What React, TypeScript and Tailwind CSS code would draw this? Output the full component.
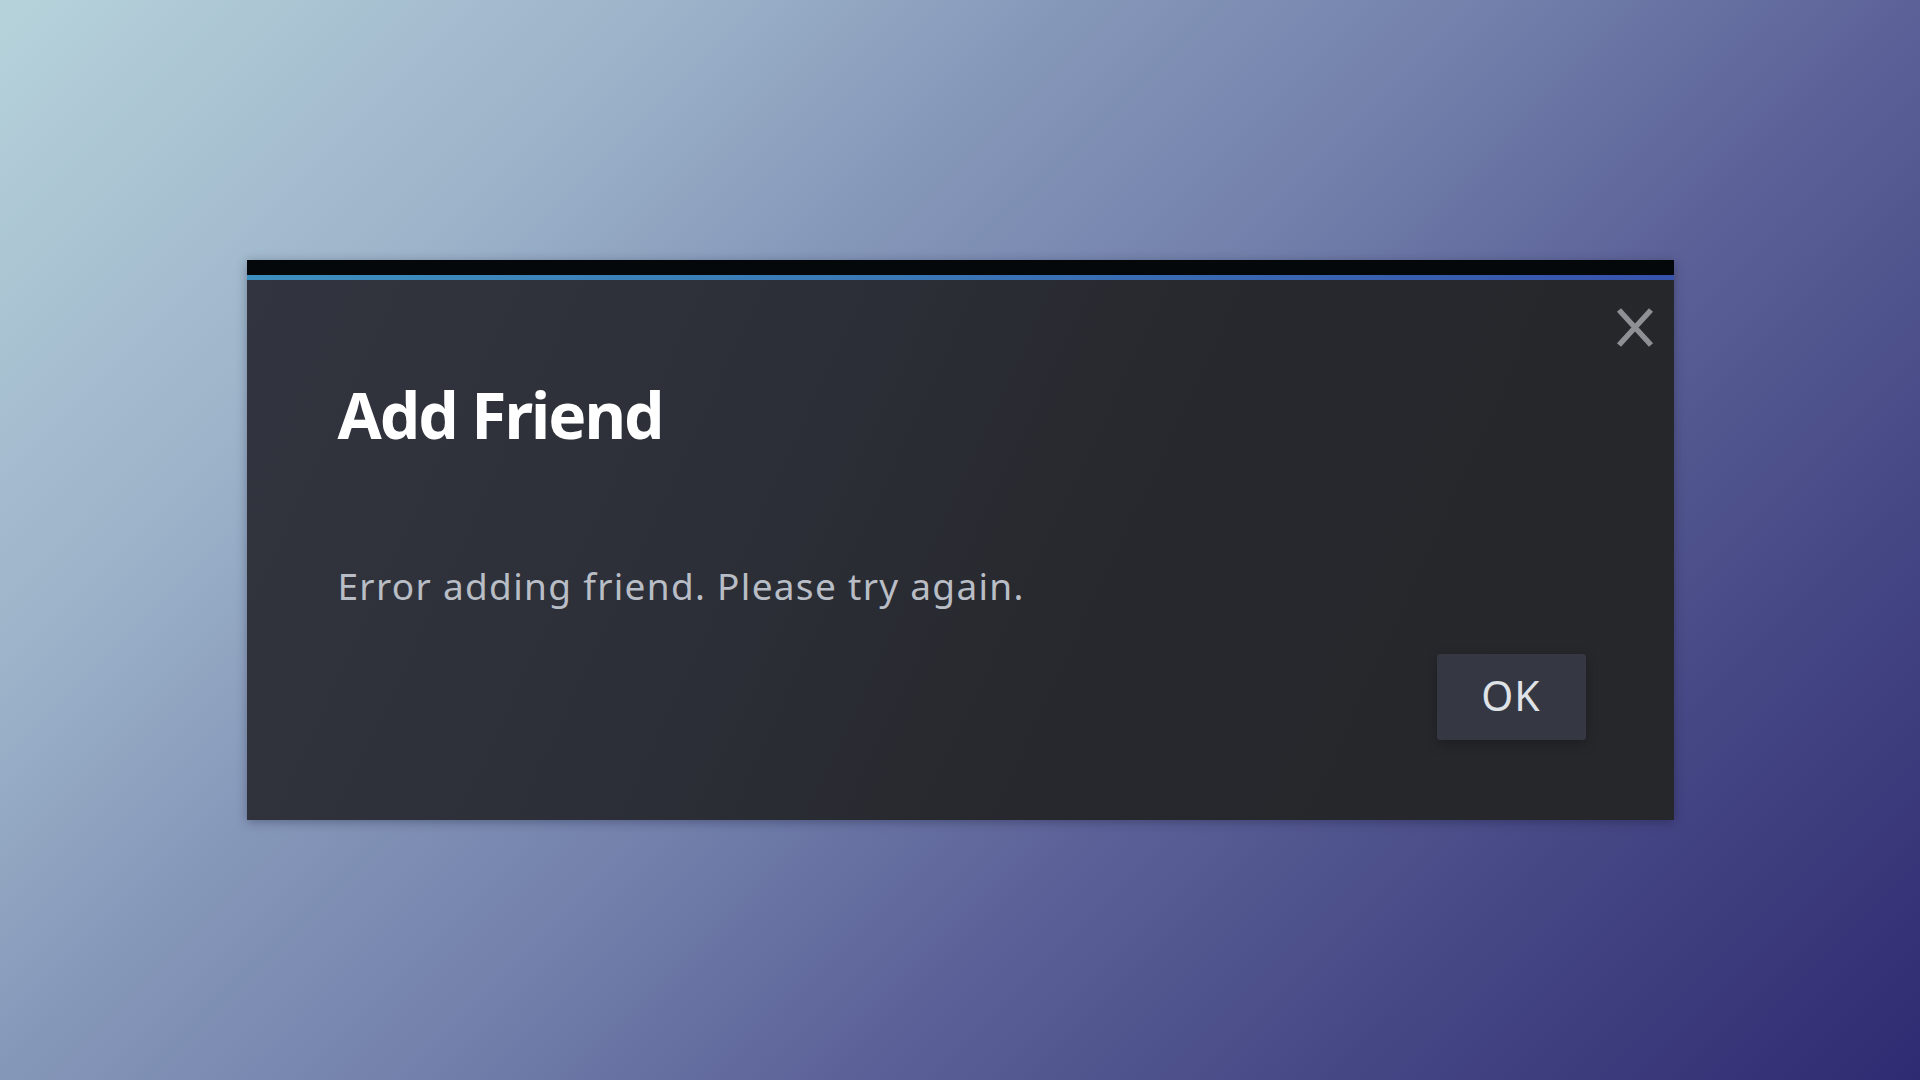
export default function App() {
  return (
    <div className="flex h-screen w-full items-center justify-center bg-[linear-gradient(135deg,#b6d3db_0%,#9cb2c9_23%,#8597b9_36%,#7280ab_50%,#5c6298_64%,#464885_80%,#2f2b72_100%)] font-['Noto_Sans','Open_Sans',sans-serif]">
      <div className="relative flex w-[1427px] flex-col shadow-[0_2px_10px_rgba(20,20,50,0.35)]">
        <div className="h-[15px] bg-[#05080a]" />
        <div className="h-[5px] bg-[linear-gradient(to_right,#3d8fbd_0%,#3a78b6_45%,#3752ab_100%)]" />

        <div className="flex flex-col bg-[linear-gradient(115deg,#32353f_0%,#2c2f37_35%,#26282d_60%,#25272b_100%)] pb-[80px] pl-[91px] pr-[88px] pt-[103px]">
          <h1 className="text-[64px] font-bold leading-none tracking-[-2px] text-white">
            Add Friend
          </h1>
          <p className="mt-[120px] text-[37px] leading-none tracking-[1.3px] text-[#b9bdc5]">
            Error adding friend. Please try again.
          </p>
          <div className="mt-[50px] flex justify-end">
            <button className="flex h-[86px] w-[149px] items-center justify-center rounded-[3px] bg-[#353843] pb-1 text-[41px] leading-none tracking-[1px] text-[#dfe2e6] shadow-[0_4px_12px_rgba(0,0,0,0.25)]">
              OK
            </button>
          </div>
        </div>

        <button className="absolute right-[20px] top-[47px] text-[#8d9095]" aria-label="Close">
          <svg width="38" height="41" viewBox="0 0 38 41" fill="none">
            <path d="M3 3 L35 38 M35 3 L3 38" stroke="currentColor" strokeWidth="5.5" />
          </svg>
        </button>
      </div>
    </div>
  );
}
